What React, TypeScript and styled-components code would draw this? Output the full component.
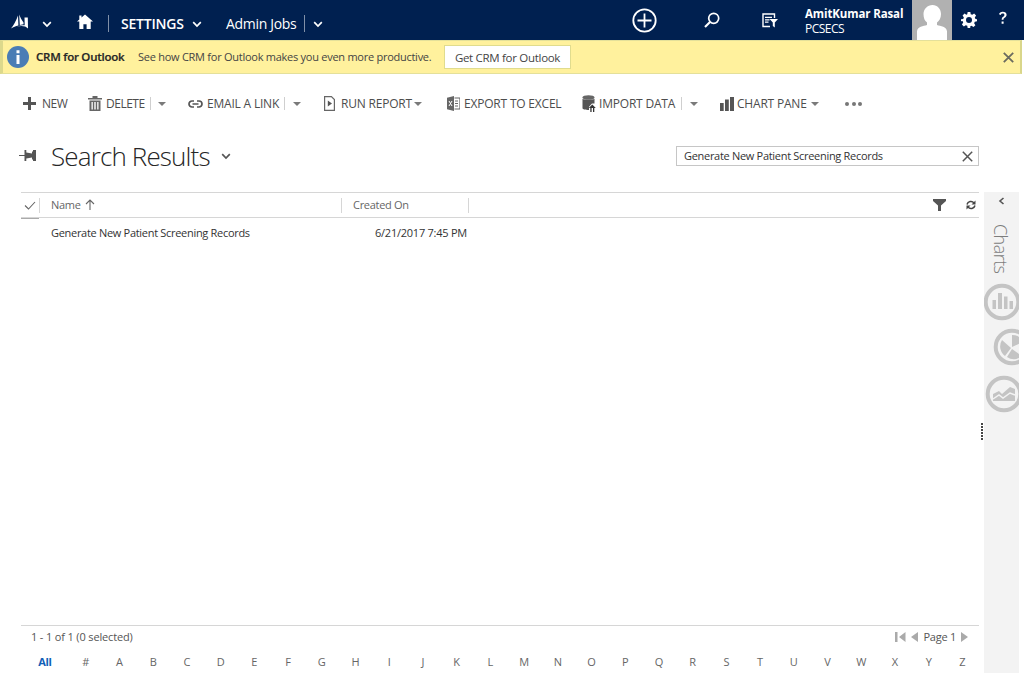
import React from "react";
import styled, { createGlobalStyle } from "styled-components";

const Global = createGlobalStyle`
  html, body { margin: 0; padding: 0; background: #fff; }
  body { font-family: "Open Sans", "Noto Sans", "Liberation Sans", sans-serif; overflow: hidden; }
  #root { width: 1024px; height: 673px; }
`;

const Page = styled.div`
  width: 1024px; height: 673px; display: flex; flex-direction: column; overflow: hidden; background: #fff; color: #444; position: relative;
`;
const Nav = styled.header`
  height: 40px; flex: none; background: #002050; color: #fff; display: flex; align-items: center;
`;
const NavSlot = styled.div<{ $left: number; $pad?: number }>`
  margin-left: ${p => p.$left}px; padding-top: ${p => p.$pad ?? 0}px; box-sizing: border-box;
  flex: none; display: flex; align-items: center; justify-content: center; height: 40px;
`;
const NavSep = styled.span<{ $left: number }>`
  margin-left: ${p => p.$left}px; margin-top: 6px; width: 1px; height: 17px; background: #8090a8; flex: none;
`;
const Settings = styled.span`
  font-size: 14px; font-weight: 600; letter-spacing: -0.2px; margin-left: 12px; padding-top: 6px; width: 63px; flex: none; white-space: nowrap;
`;
const NavLink = styled.span`
  font-size: 14px; letter-spacing: -0.32px; margin-left: 24px; padding-top: 6px; width: 70px; flex: none; white-space: nowrap;
`;
const User = styled.div`
  margin-left: 27px; width: 107px; flex: none; display: flex; flex-direction: column; line-height: 15px; margin-top: 1px;
`;
const UserName = styled.span` font-size: 11.5px; font-weight: 700; letter-spacing: -0.12px; white-space: nowrap; `;
const UserOrg = styled.span` font-size: 12px; letter-spacing: -0.5px; `;
const Avatar = styled.div`
  width: 40px; height: 40px; background: #b1b1b1; flex: none; overflow: hidden;
`;
const Notice = styled.div`
  height: 34px; width: 1022px; box-sizing: border-box; flex: none; background: #fff19d;
  border: 1px solid #e4e09a; border-left: 3px solid #dcd98c; border-right: 2px solid #d9d68a;
  display: flex; align-items: center; padding-left: 4px;
`;
const NoticeTitle = styled.b` font-size: 11.5px; font-weight: 600; color: #262626; letter-spacing: -0.25px; margin-left: 7px; width: 102px; flex: none; white-space: nowrap; -webkit-text-stroke: .2px #262626; padding-bottom: 1px; `;
const NoticeText = styled.span` font-size: 11px; color: #444; letter-spacing: -0.26px; width: 306px; flex: none; white-space: nowrap; padding-bottom: 1px; `;
const NoticeButton = styled.button`
  width: 127px; height: 24px; flex: none; box-sizing: border-box; background: #fff; border: 1px solid #e0dc8e; font: inherit; font-size: 11.5px; color: #444; letter-spacing: -0.3px; padding: 0; margin-right: 432px; white-space: nowrap;
`;
const CommandBar = styled.nav`
  height: 59px; flex: none; display: flex; align-items: center;
`;
const Cmd = styled.div<{ $left: number; $width: number }>`
  margin-left: ${p => p.$left}px; width: ${p => p.$width}px; flex: none; display: flex; align-items: center; height: 20px;
`;
const CmdLabel = styled.span<{ $left: number; $width: number; $tight?: boolean }>`
  margin-left: ${p => p.$left}px; width: ${p => p.$width}px; flex: none; font-size: 12px; color: #4d4d4d; white-space: nowrap; letter-spacing: ${p => (p.$tight ? "-0.5px" : "-0.2px")}; line-height: 20px;
`;
const CmdSep = styled.span<{ $left: number }>`
  margin-left: ${p => p.$left}px; width: 1px; height: 13px; background: #cfcfcf; flex: none;
`;
const Caret = styled.span<{ $left: number }>`
  margin-left: ${p => p.$left}px; flex: none; width: 0; height: 0; border-left: 4px solid transparent; border-right: 4px solid transparent; border-top: 4px solid #7a7a7a;
`;
const Dots = styled.span`
  display: flex; gap: 2.5px; margin-left: 25px;
  i { width: 4px; height: 4px; border-radius: 50%; background: #777; display: block; }
`;
const TitleRow = styled.div`
  height: 59px; flex: none; display: flex; align-items: flex-start;
`;
const PinSlot = styled.div`
  margin-left: 19px; height: 44px; width: 17px; flex: none; display: flex; align-items: center;
`;
const Title = styled.h1`
  margin: 0 0 0 15px; width: 160px; flex: none; font-size: 26px; font-weight: 300; color: #262626; letter-spacing: -0.86px; line-height: 30px; padding-top: 8px; white-space: nowrap;
`;
const TitleChev = styled.div`
  margin-left: 10px; width: 10px; height: 46px; flex: none; display: flex; align-items: center;
`;
const SearchBox = styled.div`
  margin-left: 445px; margin-top: 13px; width: 303px; height: 20px; box-sizing: border-box; border: 1px solid #c6c6c6; display: flex; align-items: center; justify-content: space-between; padding: 0 5px 0 7px; flex: none;
`;
const SearchText = styled.span` font-size: 11px; color: #333; letter-spacing: -0.3px; white-space: nowrap; padding-bottom: 2px; `;
const Content = styled.div`
  flex: 1; min-height: 0; display: flex;
`;
const Main = styled.main`
  margin-left: 21px; width: 958px; flex: none; display: flex; flex-direction: column;
`;
const Side = styled.aside`
  margin-left: 5px; width: 35px; flex: none; background: #f3f3f3; display: flex; flex-direction: column; overflow: hidden;
`;
const Splitter = styled.span`
  position: absolute; left: 981px; top: 423px; width: 2px; height: 18px;
  background: repeating-linear-gradient(to bottom, #444 0 2px, transparent 2px 3px);
`;
const GridHead = styled.div`
  height: 26px; box-sizing: border-box; border-top: 1px solid #d6d6d6; border-bottom: 1px solid #d6d6d6; display: flex; align-items: center; flex: none; position: relative; font-size: 11px; color: #666;
  &::after { content: ""; position: absolute; left: 0; bottom: -2px; width: 18px; height: 1px; background: #aaa; }
`;
const CheckCell = styled.div` width: 18px; flex: none; display: flex; justify-content: center; `;
const HeadCell = styled.div<{ $width: number }>`
  width: ${p => p.$width}px; flex: none; box-sizing: border-box; height: 15px; border-left: 1px solid #d6d6d6; padding-left: 11px; padding-bottom: 1px; display: flex; align-items: center; gap: 4px; white-space: nowrap; letter-spacing: -0.3px; line-height: 13px;
`;
const HeadEnd = styled.div`
  flex: 1; height: 15px; border-left: 1px solid #d6d6d6; display: flex; align-items: center; justify-content: flex-end; gap: 20px; padding-right: 3px;
`;
const Row = styled.div`
  height: 30px; padding-bottom: 2px; box-sizing: border-box; display: flex; align-items: center; font-size: 11px; color: #333; flex: none; letter-spacing: -0.3px;
`;
const RowName = styled.span` margin-left: 30px; width: 320px; flex: none; white-space: nowrap; `;
const RowDate = styled.span` width: 96px; flex: none; text-align: right; white-space: nowrap; letter-spacing: -0.24px; `;
const Spacer = styled.div` flex: 1; `;
const Footer = styled.footer`
  height: 48px; box-sizing: border-box; flex: none; border-top: 1px solid #d6d6d6; display: flex; flex-direction: column;
`;
const FooterTop = styled.div`
  height: 21px; margin-bottom: 2px; display: flex; align-items: center; justify-content: space-between; padding: 0 11px 0 10px; font-size: 11px; color: #555; letter-spacing: -0.15px; flex: none;
`;
const Pager = styled.div` display: flex; align-items: center; gap: 5px; letter-spacing: -0.24px; `;
const Alpha = styled.div`
  display: flex; align-items: center; height: 24px; font-size: 11px; color: #666; flex: none;
`;
const AlphaAll = styled.span` width: 47.9px; text-align: center; flex: none; color: #1160b7; font-weight: 700; letter-spacing: -0.3px; `;
const AlphaKey = styled.span` width: 33.72px; text-align: center; flex: none; `;
const Collapse = styled.div` height: 18px; display: flex; align-items: center; justify-content: center; flex: none; `;
const ChartsLabel = styled.div`
  writing-mode: vertical-rl; font-size: 18px; font-weight: 300; color: #7c7c7c; letter-spacing: -0.55px; line-height: 20px; margin: 14px 0 0 7px; height: 50px; flex: none; white-space: nowrap; width: 20px;
`;
const ChartIcon = styled.svg<{ $left: number; $top: number }>`
  margin-left: ${p => p.$left}px; margin-top: ${p => p.$top}px; flex: none; display: block; overflow: visible;
`;
const Icon = styled.svg` display: block; flex: none; `;

const Chev = ({ c = "#fff" }: { c?: string }) => (
  <Icon width="10" height="7" viewBox="0 0 10 7"><path d="M1.2 1.2 5 5l3.8-3.8" fill="none" stroke={c} strokeWidth="1.7" /></Icon>
);

const Logo = () => (
  <Icon width="17" height="15" viewBox="0 0 17 15">
    <path d="M0 14.500C2.500 11.500 5 7 7 1.500L7.400 11.500C4.500 12 2.500 13 0 14.500Z" fill="#fff" />
    <path d="M8.200.5C9.500 3.500 10.500 6 12.500 8.500L12.500 10.300 8.800 11Z" fill="#fff" />
    <path d="M13.500 3.500 16.800 3.500 17 14.500C14.500 11.800 10 11.300 5 13 8 11.700 11 11.300 13.700 11.300Z" fill="#fff" />
  </Icon>
);

const Bars = () => (
  <Icon width="14" height="14" viewBox="0 0 14 14">
    <path d="M0 6h3.700v8H0zM5 2.500h3.800V14H5zM10 0h4v14h-4z" fill="#555" />
  </Icon>
);

const keys = "#ABCDEFGHIJKLMNOPQRSTUVWXYZ".split("");

export default function App() {
  return (
    <Page>
      <Global />
      <Nav>
        <NavSlot $left={11} $pad={2}><Logo /></NavSlot>
        <NavSlot $left={14} $pad={8}><Chev /></NavSlot>
        <NavSlot $left={25} $pad={2}>
          <Icon width="16" height="15" viewBox="0 0 16 15"><path d="M8 .5 16 7.600h-2.300V15H9.600v-4.800H6.400V15H2.300V7.600H0L2.300 5.500V1.400h2.200v2.100Z" fill="#fff" /></Icon>
        </NavSlot>
        <NavSep $left={15} />
        <Settings>SETTINGS</Settings>
        <NavSlot $left={8} $pad={8}><Chev /></NavSlot>
        <NavLink>Admin Jobs</NavLink>
        <NavSep $left={8} />
        <NavSlot $left={8} $pad={8}><Chev /></NavSlot>
        <NavSlot $left={309}>
          <Icon width="25" height="25" viewBox="0 0 25 25"><circle cx="12.500" cy="12.500" r="11.200" fill="none" stroke="#fff" strokeWidth="1.800" /><path d="M12.500 5.500v14M5.500 12.500h14" stroke="#fff" strokeWidth="1.800" /></Icon>
        </NavSlot>
        <NavSlot $left={47}>
          <Icon width="16" height="16" viewBox="0 0 16 16"><circle cx="9.700" cy="6.300" r="5" fill="none" stroke="#fff" strokeWidth="1.700" /><path d="M6 10 1 15" stroke="#fff" strokeWidth="2.200" /></Icon>
        </NavSlot>
        <NavSlot $left={42}>
          <Icon width="16" height="15" viewBox="0 0 16 15"><path d="M8 13.500H1V1h11.500v4" fill="none" stroke="#fff" strokeWidth="1.400" /><path d="M3 4.300h7M3 6.800h4.500M3 9.200h3.500" stroke="#fff" strokeWidth="1.300" /><path d="M7.500 6h8.500l-3.200 3.600V14.500l-2-1.400V9.600Z" fill="#fff" /></Icon>
        </NavSlot>
        <User>
          <UserName>AmitKumar Rasal</UserName>
          <UserOrg>PCSECS</UserOrg>
        </User>
        <Avatar>
          <Icon width="40" height="40" viewBox="0 0 40 40"><path d="M20.500 5c5 0 8.500 4 8.500 9 0 4-1.700 7-4 8.400v2.600c3.500 1.300 9.700 1.500 10 6.500V40H5v-8.500c.3-5 6.500-5.200 10-6.500v-2.600c-2.300-1.400-3.500-4.400-3.500-8.400 0-5 4-9 9-9Z" fill="#fff" /></Icon>
        </Avatar>
        <NavSlot $left={9}>
          <Icon width="16" height="16" viewBox="0 0 24 24"><path fillRule="evenodd" clipRule="evenodd" d="M10 0h4l.6 3.300 2.300 1 2.800-1.900 2.900 2.900-1.900 2.800 1 2.300L24 11v3l-3.300.6-1 2.300 1.900 2.800-2.900 2.900-2.800-1.900-2.300 1L14 24h-4l-.6-3.300-2.300-1-2.800 1.900-2.900-2.900 1.900-2.800-1-2.300L0 14v-3l3.300-.6 1-2.300L2.400 5.300l2.900-2.900L8 4.300l1.400-1L10 0Zm2 7.500a4.500 4.500 0 1 0 0 9 4.500 4.500 0 0 0 0-9Z" fill="#fff" /></Icon>
        </NavSlot>
        <NavSlot $left={21}>
          <Icon width="10" height="14" viewBox="0 0 10 14" style={{ marginTop: -4 }}><path d="M1 3.300C1.300 1.500 2.800.7 4.700.7c2.300 0 3.900 1.200 3.900 3 0 1.500-.9 2.200-2 3-.9.6-1.100 1-1.100 2H3.700c0-1.500.4-2.200 1.400-2.900.8-.6 1.300-1 1.300-1.900 0-.8-.6-1.300-1.700-1.300-1 0-1.600.5-1.800 1.400ZM3.600 10.500h2v2.300h-2Z" fill="#fff" /></Icon>
        </NavSlot>
      </Nav>

      <Notice>
        <Icon width="22" height="22" viewBox="0 0 22 22"><circle cx="11" cy="11" r="11" fill="#4a7db5" /><path d="M9.500 9h3v9h-3zM9.500 4.300h3v3h-3z" fill="#fff" /></Icon>
        <NoticeTitle>CRM for Outlook</NoticeTitle>
        <NoticeText>See how CRM for Outlook makes you even more productive.</NoticeText>
        <NoticeButton>Get CRM for Outlook</NoticeButton>
        <Icon width="11" height="11" viewBox="0 0 11 11"><path d="M.8.800l9.400 9.400M10.200.800.800 10.200" stroke="#6b6b5f" strokeWidth="1.800" /></Icon>
      </Notice>

      <CommandBar>
        <Cmd $left={23} $width={46}>
          <Icon width="13" height="13" viewBox="0 0 13 13"><path d="M5 0h3v5h5v3H8v5H5V8H0V5h5Z" fill="#555" /></Icon>
          <CmdLabel $left={6} $width={27} $tight>NEW</CmdLabel>
        </Cmd>
        <Cmd $left={19} $width={83}>
          <Icon width="14" height="15" viewBox="0 0 14 15"><path d="M0 2h14v1.500H0zM4.500 0h5v2h-5zM1.500 4.500h11V15h-11zM3.500 6v7.500h1.300V6zM6.300 6v7.500h1.400V6zM9.200 6v7.500h1.300V6z" fill="#666" fillRule="evenodd" /></Icon>
          <CmdLabel $left={4} $width={39} $tight>DELETE</CmdLabel>
          <CmdSep $left={5} />
          <Caret $left={7} />
        </Cmd>
        <Cmd $left={17} $width={115}>
          <Icon width="15" height="8" viewBox="0 0 15 8"><path d="M6 1H4a3 3 0 0 0 0 6h2M9 1h2a3 3 0 0 1 0 6H9M4.500 4h6" fill="none" stroke="#555" strokeWidth="1.700" /></Icon>
          <CmdLabel $left={4} $width={73}>EMAIL A LINK</CmdLabel>
          <CmdSep $left={4} />
          <Caret $left={8} />
        </Cmd>
        <Cmd $left={21} $width={100}>
          <Icon width="11" height="15" viewBox="0 0 11 15"><path d="M.6.600h6.800L10.400 3.600V14.400H.6Z" fill="none" stroke="#666" strokeWidth="1.200" /><path d="M3.800 4.500 8 7.500 3.800 10.500Z" fill="#555" /></Icon>
          <CmdLabel $left={6} $width={71}>RUN REPORT</CmdLabel>
          <Caret $left={2} />
        </Cmd>
        <Cmd $left={23} $width={114}>
          <Icon width="13" height="15" viewBox="0 0 13 15"><path d="M0 1.800 7 0v15L0 13.200Z" fill="#666" /><path d="M7.500 2H13v11H7.500" fill="none" stroke="#666" strokeWidth="1.200" /><path d="M8 5h3M8 7.500h3M8 10h3" stroke="#666" /><path d="M2 5l3 5M5 5l-3 5" stroke="#fff" strokeWidth="1" /></Icon>
          <CmdLabel $left={4} $width={96}>EXPORT TO EXCEL</CmdLabel>
        </Cmd>
        <Cmd $left={21} $width={121}>
          <Icon width="15" height="17" viewBox="0 0 15 17"><ellipse cx="6.500" cy="2.500" rx="6" ry="2.300" fill="#666" /><path d="M.5 3.700c1.500 1.500 10.500 1.500 12 0V8.500H10l-3 3.200V15C3.500 15 .5 14.300.5 13.300Z" fill="#555" /><path d="M8.300 17v-4H6.800L10.300 9.500 13.800 13H12.300v4h-1.300v-4H9.600v4Z" fill="#333" /></Icon>
          <CmdLabel $left={2} $width={77}>IMPORT DATA</CmdLabel>
          <CmdSep $left={5} />
          <Caret $left={8} />
        </Cmd>
        <Cmd $left={17} $width={100}>
          <Bars />
          <CmdLabel $left={3} $width={71}>CHART PANE</CmdLabel>
          <Caret $left={3} />
        </Cmd>
        <Dots><i /><i /><i /></Dots>
      </CommandBar>

      <TitleRow>
        <PinSlot>
          <Icon width="17" height="11" viewBox="0 0 17 11"><path d="M0 5h6v1H0z" fill="#555" /><path d="M5.500 0h1.800v2.500l5.700 1V1.500h1V0h3v11h-3V9.500h-1V7.500l-5.700 1V11H5.500Z" fill="#555" /></Icon>
        </PinSlot>
        <Title>Search Results</Title>
        <TitleChev><Chev c="#555" /></TitleChev>
        <SearchBox>
          <SearchText>Generate New Patient Screening Records</SearchText>
          <Icon width="11" height="11" viewBox="0 0 11 11"><path d="M.8.800l9.400 9.400M10.200.800.800 10.200" stroke="#555" strokeWidth="1.500" /></Icon>
        </SearchBox>
      </TitleRow>

      <Content>
        <Main>
          <GridHead>
            <CheckCell>
              <Icon width="12" height="9" viewBox="0 0 12 9"><path d="M1 4.500 4.500 8 11 1" fill="none" stroke="#666" strokeWidth="1.100" /></Icon>
            </CheckCell>
            <HeadCell $width={302}>
              Name
              <Icon width="10" height="11" viewBox="0 0 10 11"><path d="M5 11V1M1 5l4-4 4 4" fill="none" stroke="#666" strokeWidth="1.100" /></Icon>
            </HeadCell>
            <HeadCell $width={127}>Created On</HeadCell>
            <HeadEnd>
              <Icon width="13" height="12" viewBox="0 0 13 12"><path d="M0 0h13v2L8 6.500V12H5V6.500L0 2Z" fill="#555" /></Icon>
              <Icon width="10" height="10" viewBox="0 0 10 10"><path d="M1 4.500A4 4 0 0 1 8 3M9 5.500A4 4 0 0 1 2 7" fill="none" stroke="#444" strokeWidth="1.500" /><path d="M9.500.5v4h-4zM.5 9.500v-4h4z" fill="#444" /></Icon>
            </HeadEnd>
          </GridHead>
          <Row>
            <RowName>Generate New Patient Screening Records</RowName>
            <RowDate>6/21/2017 7:45 PM</RowDate>
          </Row>
          <Spacer />
          <Footer>
            <FooterTop>
              <span>1 - 1 of 1 (0 selected)</span>
              <Pager>
                <Icon width="11" height="10" viewBox="0 0 11 10"><path d="M0 0h2.500v10H0zM10.500 0v10L4 5Z" fill="#aaa" /></Icon>
                <Icon width="7" height="10" viewBox="0 0 7 10"><path d="M7 0v10L0 5Z" fill="#aaa" /></Icon>
                <span>Page 1</span>
                <Icon width="7" height="10" viewBox="0 0 7 10"><path d="M0 0v10l7-5Z" fill="#aaa" /></Icon>
              </Pager>
            </FooterTop>
            <Alpha>
              <AlphaAll>All</AlphaAll>
              {keys.map(k => <AlphaKey key={k}>{k}</AlphaKey>)}
            </Alpha>
          </Footer>
        </Main>
        <Side>
          <Collapse><Icon width="7" height="8" viewBox="0 0 7 8"><path d="M5.500 1 2 4l3.500 3" fill="none" stroke="#555" strokeWidth="1.600" /></Icon></Collapse>
          <ChartsLabel>Charts</ChartsLabel>
          <ChartIcon $left={0} $top={9} width="36" height="38" viewBox="0 0 36 38">
            <circle cx="18" cy="19" r="16.300" fill="none" stroke="#c4c4c4" strokeWidth="4" />
            <path d="M8.500 17h3.500v9H8.500zM14 10h4v16h-4zM20 13.500h3.500V26H20zM25.500 18H29v8h-3.500z" fill="#c4c4c4" />
          </ChartIcon>
          <ChartIcon $left={10} $top={7} width="36" height="38" viewBox="0 0 36 38">
            <circle cx="18" cy="19" r="16.300" fill="none" stroke="#c4c4c4" strokeWidth="4" />
            <path d="M18 7a12 12 0 0 1 11 7l-11 5ZM8 12l9 8-6 8a12 12 0 0 1-3-16ZM13 29l5-8 10 7a12 12 0 0 1-15 1Z" fill="#c4c4c4" />
          </ChartIcon>
          <ChartIcon $left={2} $top={9} width="36" height="38" viewBox="0 0 36 38">
            <circle cx="18" cy="19" r="16.300" fill="none" stroke="#c4c4c4" strokeWidth="4" />
            <path d="M7 19l6-3 3 3 8-7 5 2v12H7Z" fill="#c4c4c4" /><path d="M7 24l6-4 4 3 7-5 5 2" fill="none" stroke="#f3f3f3" strokeWidth="1.500" />
          </ChartIcon>
        </Side>
      </Content>
      <Splitter />
    </Page>
  );
}
